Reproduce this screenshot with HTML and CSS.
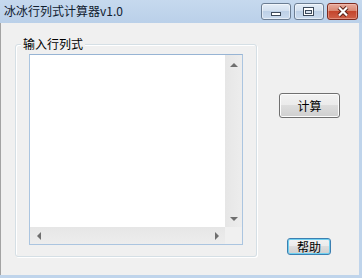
FILE: index.html
```html
<!DOCTYPE html>
<html lang="zh-CN">
<head>
    <meta charset="UTF-8">
    <title>冰冰行列式计算器v1.0</title>
    <link rel="stylesheet" href="styles.css">
</head>
<body>
    <div class="window">
        <div class="titlebar">
            <span class="title">冰冰行列式计算器v1.0</span>
            <div class="caption-buttons">
                <div class="cap-btn">
                    <svg width="12" height="6" viewBox="0 0 12 6"><rect x="1.5" y="1.5" width="9" height="3" fill="#fff" stroke="#3d4a5a"/></svg>
                </div>
                <div class="cap-btn">
                    <svg width="12" height="10" viewBox="0 0 12 10"><rect x="0.5" y="0.5" width="10" height="8" fill="#fff" stroke="#3d4a5a"/><rect x="2.5" y="3.5" width="6" height="3" fill="#d8e2ee" stroke="#3d4a5a"/></svg>
                </div>
                <div class="cap-btn close">
                    <svg width="12" height="11" viewBox="0 0 12 11"><path d="M2 1.5 L10 9.5 M10 1.5 L2 9.5" stroke="#5b2218" stroke-width="4.2"/><path d="M2 1.5 L10 9.5 M10 1.5 L2 9.5" stroke="#fff" stroke-width="2.2"/></svg>
                </div>
            </div>
        </div>

        <div class="client">
            <div class="group">
                <div class="group-title">输入行列式</div>
                <div class="editor">
                    <div class="editor-text"></div>
                    <div class="vscroll">
                        <div class="arrow-box"><span class="arrow up"></span></div>
                        <div class="arrow-box"><span class="arrow down"></span></div>
                    </div>
                    <div class="hscroll">
                        <div class="arrow-box"><span class="arrow left"></span></div>
                        <div class="arrow-box"><span class="arrow right"></span></div>
                    </div>
                    <div class="corner"></div>
                </div>
            </div>

            <div class="side">
                <button class="btn calc">计算</button>
                <button class="btn help">帮助</button>
            </div>
        </div>
    </div>
</body>
</html>
```

FILE: styles.css
```css
* {
    margin: 0;
    padding: 0;
    box-sizing: border-box;
}

body {
    font-family: "Noto Sans CJK SC", "Noto Sans", sans-serif;
    font-size: 12px;
    background-color: #f0f0f0;
}

.window {
    width: 362px;
    height: 278px;
    display: flex;
    flex-direction: column;
    background-color: #bfd4eb;
}

/* title bar */
.titlebar {
    height: 23px;
    display: flex;
    align-items: flex-start;
    padding: 0 4px 0 4px;
    background: linear-gradient(#c6d9ee, #bad0e9);
}

.title {
    margin-top: 4px;
    line-height: 14px;
    color: #10202f;
}

.caption-buttons {
    margin-left: auto;
    margin-top: 3px;
    display: flex;
    gap: 3px;
}

.cap-btn {
    width: 30px;
    height: 17px;
    border: 1px solid #6b7d92;
    border-radius: 3px;
    display: flex;
    justify-content: center;
    align-items: center;
    background: linear-gradient(#e4edf7 0%, #d3e0ef 45%, #bdd0e6 50%, #cbdbee 100%);
    box-shadow: inset 0 0 0 1px rgba(255, 255, 255, 0.5);
}

.cap-btn:first-child svg {
    margin-top: 5px;
}

.cap-btn.close {
    width: 31px;
    border-color: #7d2a1e;
    background: linear-gradient(#e7ab9d 0%, #d98872 45%, #c4462d 50%, #cf6149 100%);
    box-shadow: inset 0 0 0 1px rgba(255, 210, 200, 0.4);
}

/* client area */
.client {
    flex: 1;
    margin: 0 3px 3px 0;
    border-left: 1px solid #a3a3a3;
    background-color: #f0f0f0;
    display: flex;
    padding: 21px 0 0 14px;
}

.group {
    width: 242px;
    height: 213px;
    border: 1px solid #d5dfe5;
    border-radius: 3px;
    box-shadow: inset 1px 1px 0 #fff, 1px 1px 0 #fff;
}

.group-title {
    width: fit-content;
    margin: -8px 0 0 5px;
    padding: 0 2px;
    line-height: 14px;
    background-color: #f0f0f0;
    color: #000;
}

.editor {
    margin: 3px 13px 0 13px;
    height: 191px;
    border: 1px solid #abc5e0;
    border-top-color: #97b4d4;
    display: grid;
    grid-template-columns: 1fr 17px;
    grid-template-rows: 1fr 17px;
    background-color: #fff;
}

.vscroll {
    background: linear-gradient(90deg, #e6e6e6, #ededed);
    display: flex;
    flex-direction: column;
    justify-content: space-between;
}

.hscroll {
    background: linear-gradient(#e6e6e6, #ededed);
    display: flex;
    justify-content: space-between;
}

.corner {
    background-color: #f0f0f0;
}

.arrow-box {
    width: 17px;
    height: 17px;
    display: flex;
    justify-content: center;
    align-items: center;
}

.arrow {
    width: 0;
    height: 0;
    border: 4px solid transparent;
}

.arrow.up {
    border-top: none;
    border-bottom-color: #6f6f6f;
    margin-top: 3px;
}

.arrow.down {
    border-bottom: none;
    border-top-color: #6f6f6f;
}

.arrow.left {
    border-left: none;
    border-right-color: #6f6f6f;
}

.arrow.right {
    border-right: none;
    border-left-color: #6f6f6f;
}

/* push buttons */
.side {
    margin-left: 22px;
    display: flex;
    flex-direction: column;
    align-items: flex-start;
}

.btn {
    font-family: "Noto Sans CJK SC", "Noto Sans", sans-serif;
    font-size: 12px;
    line-height: 14px;
    color: #000;
    border: 1px solid #707070;
    border-radius: 3px;
    background: linear-gradient(#f2f2f2 0%, #ebebeb 48%, #dddddd 50%, #cfcfcf 100%);
    box-shadow: inset 0 0 0 1px #fcfcfc;
}

.calc {
    width: 61px;
    height: 25px;
    margin-top: 49px;
}

.help {
    width: 44px;
    height: 17px;
    margin: 120px 0 0 8px;
    border-color: #3c7fb1;
    box-shadow: inset 0 0 0 1px #6fd0f0;
}
```
